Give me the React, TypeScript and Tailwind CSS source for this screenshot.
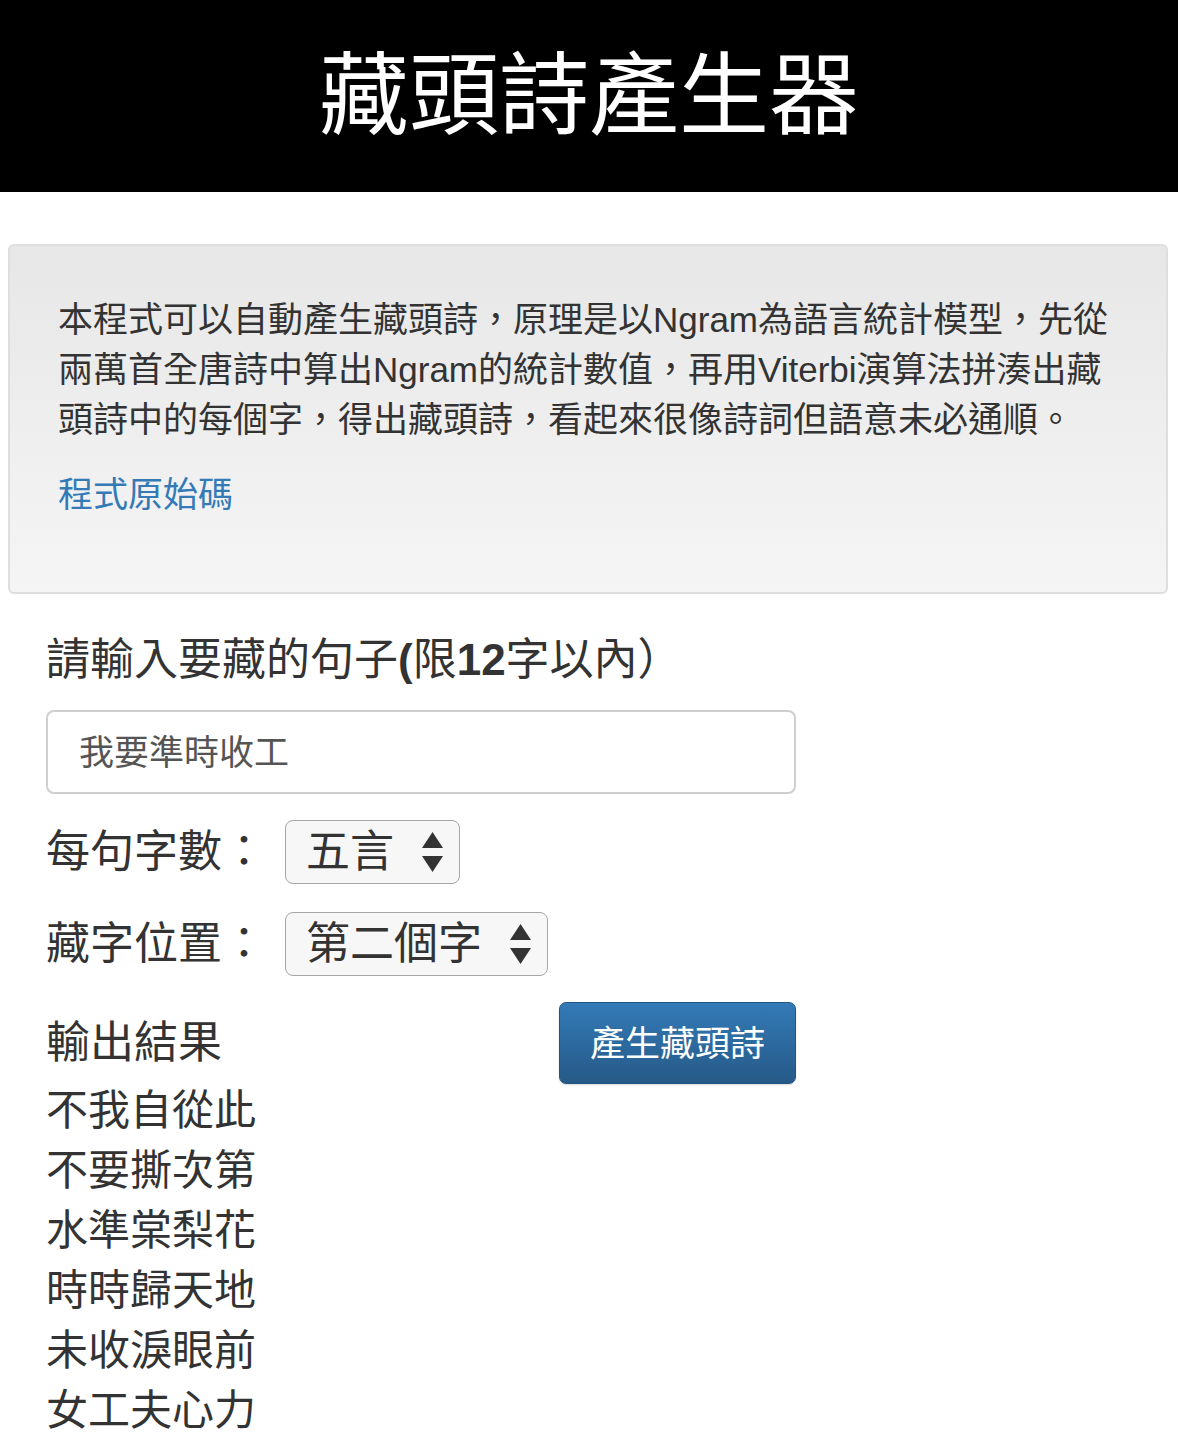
import React from "react";

const FONT = {
  fontFamily: '"Liberation Sans", "Noto Sans CJK TC", sans-serif',
};

function Arrows() {
  return (
    <svg width="21" height="40" viewBox="0 0 21 40" className="shrink-0">
      <polygon points="10.5,0 21,16 0,16" fill="#333" />
      <polygon points="0,24 21,24 10.5,40" fill="#333" />
    </svg>
  );
}

function FakeSelect({ label }: { label: string }) {
  return (
    <div className="flex h-[64px] items-center gap-[28px] rounded-[8px] border border-[#a6a6a6] bg-[#f7f7f7] pl-[20px] pr-[16px] text-[44px] leading-none text-[#333]">
      <span>{label}</span>
      <Arrows />
    </div>
  );
}

export default function App() {
  const lines = ["不我自從此", "不要撕次第", "水準棠梨花", "時時歸天地", "未收淚眼前", "女工夫心力"];
  return (
    <div className="min-h-[1448px] w-full bg-white text-[#333]" style={FONT}>
      <header className="flex h-[192px] items-center justify-center bg-black">
        <h1 className="text-[90px] font-normal leading-none text-white">藏頭詩產生器</h1>
      </header>

      <section className="ml-[8px] mr-[10px] mt-[52px] h-[350px] rounded-[6px] border-2 border-[#dedede] bg-gradient-to-b from-[#e7e7e7] to-[#f5f5f5] pl-[48px] pt-[49px]">
        <p className="whitespace-nowrap text-[35px] leading-[50px] text-[#333]">
          本程式可以自動產生藏頭詩，原理是以Ngram為語言統計模型，先從
          <br />
          兩萬首全唐詩中算出Ngram的統計數值，再用Viterbi演算法拼湊出藏
          <br />
          頭詩中的每個字，得出藏頭詩，看起來很像詩詞但語意未必通順。
        </p>
        <a className="mt-[25px] block text-[35px] leading-[50px] text-[#337ab7]" href="#">
          程式原始碼
        </a>
      </section>

      <div className="ml-[46px] w-[750px]">
        <div className="mt-[36px] h-[60px] text-[44px] leading-[60px]">
          請輸入要藏的句子<span className="font-bold">(</span>限<span className="font-bold">12</span>字以內）
        </div>

        <div className="mt-[20px] flex h-[84px] items-center rounded-[8px] border-2 border-[#cfcfcf] bg-white pl-[31px] text-[35px] leading-none text-[#555]">
          我要準時收工
        </div>

        <div className="mt-[26px] flex items-center gap-[19px]">
          <span className="text-[44px] leading-none">每句字數：</span>
          <FakeSelect label="五言" />
        </div>

        <div className="mt-[28px] flex items-center gap-[19px]">
          <span className="text-[44px] leading-none">藏字位置：</span>
          <FakeSelect label="第二個字" />
        </div>

        <div className="mt-[26px] flex items-center justify-between">
          <span className="text-[44px] leading-none">輸出結果</span>
          <button className="flex h-[82px] w-[237px] items-center justify-center rounded-[7px] border border-[#245580] bg-gradient-to-b from-[#337ab7] to-[#265a88] text-[35px] leading-none text-white shadow-[0_1px_2px_rgba(0,0,0,0.15)]">
            產生藏頭詩
          </button>
        </div>

        <div className="-mt-[3px]">
          {lines.map((l) => (
            <div key={l} className="h-[60px] text-[42px] leading-[60px]">
              {l}
            </div>
          ))}
        </div>
      </div>
    </div>
  );
}
